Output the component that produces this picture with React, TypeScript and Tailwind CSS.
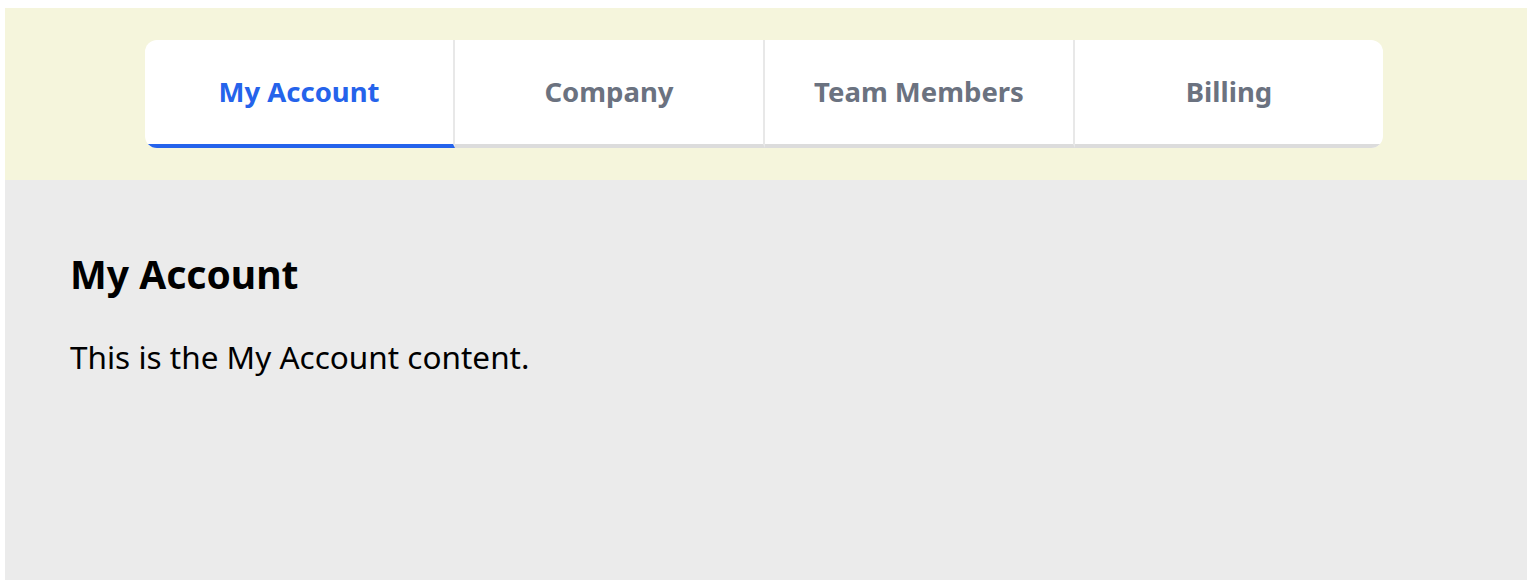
import React, { useState } from 'react';

const tabs = ['My Account', 'Company', 'Team Members', 'Billing'];

const App = () => {
  const [active, setActive] = useState('My Account');

  return (
    <div className="min-h-screen bg-white pt-[8px] px-[5px] pb-[6px] font-['Noto_Sans',sans-serif]">
      {/* Tabs header */}
      <div className="bg-[#f5f5dc] h-[172px] pt-[32px] pl-[140px] pr-[142px]">
        <div className="flex rounded-[12px] overflow-hidden bg-white w-[1238px]">
          {tabs.map((tab, i) => (
            <button
              key={tab}
              onClick={() => setActive(tab)}
              className={`flex-1 h-[108px] flex items-center justify-center text-[27.5px] font-bold border-b-4 ${
                i < tabs.length - 1 ? 'border-r-2 border-r-[#e8e8e8]' : ''
              } ${
                active === tab
                  ? 'text-[#2563eb] border-b-[#2563eb]'
                  : 'text-[#6b7280] border-b-[#dcdcdc]'
              }`}
            >
              {tab}
            </button>
          ))}
        </div>
      </div>

      {/* Content */}
      <div className="bg-[#ebebeb] h-[400px] px-[65px] pt-[70px]">
        <h2 className="text-[39px] font-bold text-black leading-tight">{active}</h2>
        <p className="mt-[34px] text-[31.5px] text-black leading-normal">This is the {active} content.</p>
      </div>
    </div>
  );
};

export default App;
